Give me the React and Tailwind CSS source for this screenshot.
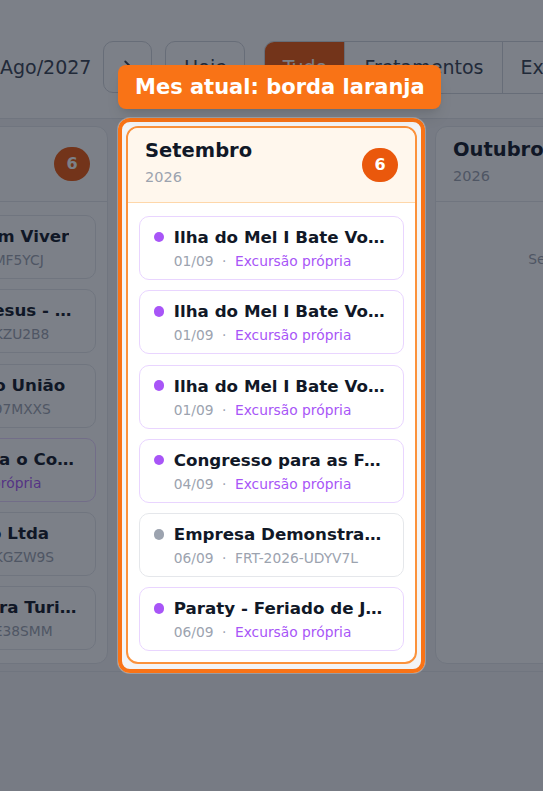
import { ChevronRight } from "lucide-react";

// Agosto / Setembro / Outubro columns of the board
const agosto = [
  { title: "Associação Bem Viver", date: "03/08", code: "FRT-2026-MF5YCJ", own: false },
  { title: "Caravana de Jesus - Romaria", date: "08/08", code: "FRT-2026-KZU2B8", own: false },
  { title: "Caravana Novo União", date: "12/08", code: "FRT-2026-97MXXS", own: false },
  { title: "Delegação para o Congresso", date: "15/08", code: "Excursão própria", own: true },
  { title: "Viação Paraíso Ltda", date: "21/08", code: "FRT-2026-KGZW9S", own: false },
  { title: "Expresso Aurora Turismo", date: "28/08", code: "FRT-2026-E38SMM", own: false },
];

const setembro = [
  { title: "Ilha do Mel I Bate Volta", date: "01/09", code: "Excursão própria", own: true },
  { title: "Ilha do Mel I Bate Volta", date: "01/09", code: "Excursão própria", own: true },
  { title: "Ilha do Mel I Bate Volta", date: "01/09", code: "Excursão própria", own: true },
  { title: "Congresso para as Famílias", date: "04/09", code: "Excursão própria", own: true },
  { title: "Empresa Demonstração Ltda", date: "06/09", code: "FRT-2026-UDYV7L", own: false },
  { title: "Paraty - Feriado de Julho", date: "06/09", code: "Excursão própria", own: true },
];

function TripCard({ item }) {
  return (
    <div
      className={`h-[64px] shrink-0 flex flex-col justify-center rounded-[10px] border-[1.5px] bg-white pl-[13.8px] pr-[13px] ${
        item.own ? "border-[#e9d5ff]" : "border-[#e5e7eb]"
      }`}
    >
      <div className="flex items-center gap-[9.3px] min-w-0">
        <span className={`w-[10.7px] h-[10.7px] rounded-full shrink-0 ${item.own ? "bg-[#a855f7]" : "bg-[#9ca3af]"}`} />
        <span className="truncate text-[16.7px] leading-[22px] font-bold text-[#111827]">{item.title}</span>
      </div>
      <div className="mt-[4px] pl-[20px] flex items-center gap-[8.5px] text-[13.8px] leading-[18px] whitespace-nowrap">
        <span className="text-[#9ca3af]">{item.date}</span>
        <span className="text-[#9ca3af]">·</span>
        <span className={item.own ? "text-[#a855f7]" : "text-[#9ca3af]"}>{item.code}</span>
      </div>
    </div>
  );
}

function MonthColumn({ month, year, items, current, count }) {
  return (
    <div
      className={`w-[291px] h-[538px] shrink-0 flex flex-col rounded-xl overflow-hidden bg-white ${
        current ? "border-2 border-[#fb923c]" : "border border-[#e5e7eb]"
      }`}
    >
      <div
        className={`h-[75px] shrink-0 flex items-center justify-between px-[17px] border-b ${
          current ? "bg-[#fff7ed] border-[#fed7aa]" : "border-[#e5e7eb]"
        }`}
      >
        <div className="mb-[5px] whitespace-nowrap">
          <div className="text-[19.5px] leading-[26px] font-bold text-[#111827]">{month}</div>
          <div className="mt-[3px] text-[14.5px] leading-[20px] text-[#9ca3af]">{year}</div>
        </div>
        {count != null && (
          <span className="w-[36px] h-[34px] rounded-full bg-[#ea580c] text-white text-[16px] font-bold flex items-center justify-center">
            {count}
          </span>
        )}
      </div>
      {items.length > 0 ? (
        <div className="flex flex-col gap-[10.3px] pt-[13px] px-[11px]">
          {items.map((item, i) => (
            <TripCard key={i} item={item} />
          ))}
        </div>
      ) : (
        <div className="pt-[48px] text-center text-[13.8px] leading-[18px] text-[#9ca3af]">Sem excursões</div>
      )}
    </div>
  );
}

export default function App() {
  return (
    <div className="relative w-[543px] h-[791px] overflow-hidden bg-[#f3f4f6] font-['DejaVu_Sans',sans-serif]">
      {/* Toolbar */}
      <div className="h-[119px] bg-white border-b border-[#e5e7eb] pt-[41px]">
        <div className="flex items-center h-[52px] whitespace-nowrap text-[19px] text-[#374151]">
          <span className="shrink-0">Ago/2027</span>
          <button className="shrink-0 ml-[12px] w-[49px] h-[52px] rounded-[10px] border border-[#d1d5db] flex items-center justify-center text-[#374151]">
            <ChevronRight size={22} strokeWidth={2} />
          </button>
          <button className="shrink-0 ml-[13px] w-[80px] h-[52px] rounded-[10px] border border-[#d1d5db]">Hoje</button>
          <div className="shrink-0 ml-[19px] flex h-[53px] rounded-[10px] border border-[#d1d5db] overflow-hidden">
            <span className="w-[79px] bg-[#ea580c] text-white flex items-center justify-center">Tudo</span>
            <span className="w-[158px] border-l border-[#d1d5db] flex items-center justify-center">Fretamentos</span>
            <span className="w-[150px] border-l border-[#d1d5db] flex items-center pl-[17px]">Excursões</span>
          </div>
        </div>
      </div>

      {/* Board */}
      <div className="h-[553px] pt-[7px] border-b border-[#e5e7eb] overflow-hidden">
        <div className="flex gap-[18px] ml-[-183px]">
          <MonthColumn month="Agosto" year="2026" items={agosto} count={6} />
          <MonthColumn month="Setembro" year="2026" items={setembro} count={6} current />
          <MonthColumn month="Outubro" year="2026" items={[]} />
        </div>
      </div>

      {/* Tour overlay: spotlight + label */}
      <div className="absolute left-[118px] top-[118px] w-[307px] h-[555px] rounded-xl border-4 border-[#f97316] shadow-[0_0_0_1px_rgba(255,255,255,0.25),0_0_0_9999px_rgba(17,24,39,0.55)]" />
      <div className="absolute left-[118px] top-[65px] w-[323px] h-[44px] rounded-lg bg-[#f97316] shadow-lg flex items-center pl-[17px] pt-[2px] text-white font-bold text-[21px] whitespace-nowrap">
        Mes atual: borda laranja
      </div>
    </div>
  );
}
